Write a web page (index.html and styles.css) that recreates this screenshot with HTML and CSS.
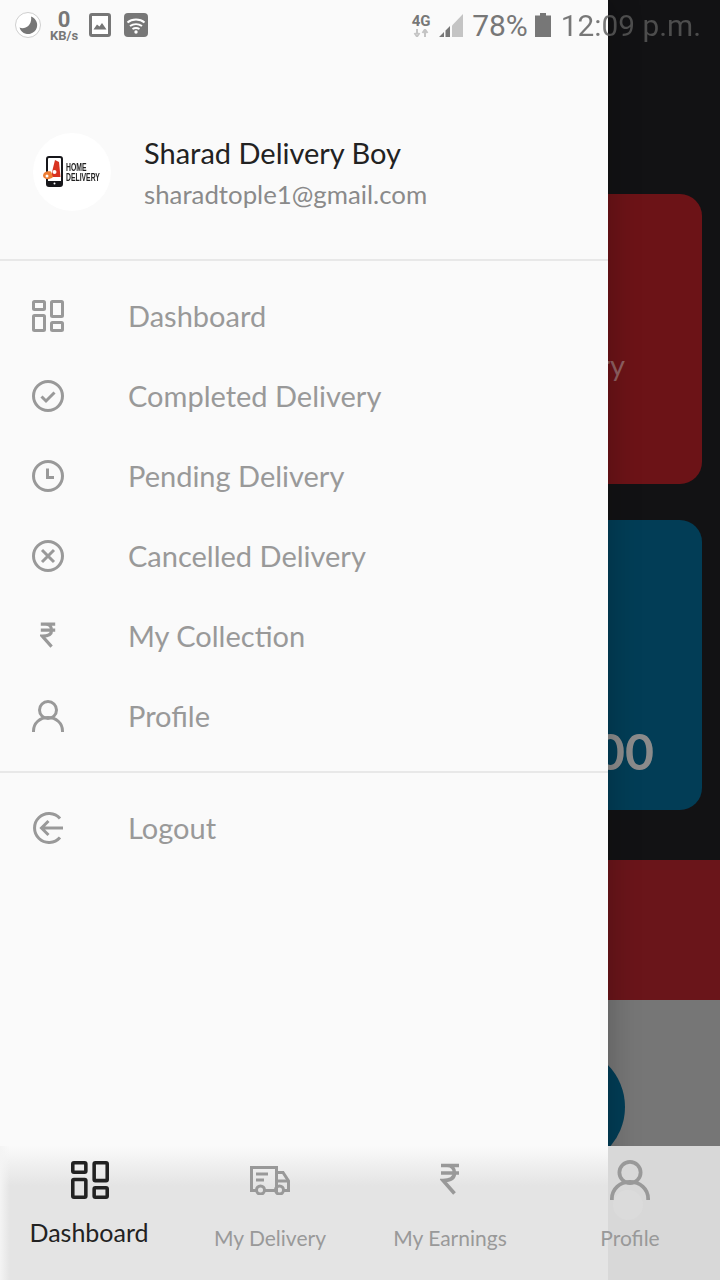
FILE: index.html
```html
<!DOCTYPE html>
<html lang="en">
<head>
  <meta charset="UTF-8">
  <meta name="viewport" content="width=device-width, initial-scale=1.0">
  <title>Home Delivery</title>
  <link rel="stylesheet" href="styles.css">
</head>
<body>

<svg class="defs" width="0" height="0">
  <symbol id="i-grid" viewBox="0 0 32 32">
    <rect x="1.500" y="1.500" width="11" height="8" rx="1"/>
    <rect x="1.500" y="15.500" width="11" height="15" rx="1"/>
    <rect x="19.500" y="1.500" width="11" height="15" rx="1"/>
    <rect x="19.500" y="22.500" width="11" height="8" rx="1"/>
  </symbol>
  <symbol id="i-rupee" viewBox="0 0 20 32">
    <path d="M1 2.500H19M1 10H19M1 2.500H7C12 2.500 14.500 6 14.500 10C14.500 14.500 11 17.500 3 17.500L14.500 30.500"/>
  </symbol>
  <symbol id="i-person" viewBox="0 0 32 32">
    <circle cx="16" cy="10" r="8.500"/>
    <path d="M1.500 32V31C1.500 23 8 17.500 16 17.500S30.500 23 30.500 31V32"/>
  </symbol>
  <symbol id="i-truck" viewBox="0 0 40 30">
    <path d="M6.500 25.500H1.500V2.500H26.500V25.500H14M26.500 7.500H33L38.500 16V25.500H33.500M26.500 25.500H25"/>
    <path d="M26.500 16H38M6 9H18M6 15H14"/>
    <circle cx="10.500" cy="25" r="4"/>
    <circle cx="29.500" cy="25" r="4"/>
  </symbol>
</svg>

<div class="screen">

  <div class="dashboard">
    <div class="card card-red"><span class="card-label">Delivery</span></div>
    <div class="card card-blue"><span class="card-value">00</span></div>
    <div class="band"></div>
    <div class="grey-area"><div class="round-btn"></div></div>
  </div>

  <aside class="drawer">
    <div class="user">
      <div class="avatar">
        <svg class="logo-phone" viewBox="0 0 22 32">
          <rect x="5" y="1" width="15" height="29" rx="2" fill="#fff" stroke="#17171b" stroke-width="2"/>
          <rect x="5" y="25" width="15" height="5" fill="#17171b"/>
          <path d="M13 4L17 6L18.500 21H9L11 12Z" fill="#d8321f"/>
          <path d="M1 20C1 16 5 14.500 9 15.500L11 21C8 24 2 24 1 20Z" fill="#ee7d33"/>
          <circle cx="5" cy="20" r="1.500" fill="#fff"/>
          <circle cx="12.500" cy="16" r="2" fill="#fff"/>
          <circle cx="12.500" cy="27.500" r="1" fill="#fff"/>
        </svg>
        <div class="logo-text">HOME<br>DELIVERY</div>
      </div>
      <div class="user-info">
        <div class="user-name">Sharad Delivery Boy</div>
        <div class="user-mail">sharadtople1@gmail.com</div>
      </div>
    </div>

    <ul class="menu">
      <li class="menu-item">
        <svg class="menu-icon"><use href="#i-grid"/></svg>
        Dashboard
      </li>
      <li class="menu-item">
        <svg class="menu-icon" viewBox="0 0 32 32"><circle cx="16" cy="16" r="14.500"/><path d="M9.500 16.500L14 21L22.500 12.500"/></svg>
        Completed Delivery
      </li>
      <li class="menu-item">
        <svg class="menu-icon" viewBox="0 0 32 32"><circle cx="16" cy="16" r="14.500"/><path d="M15.500 8.500V17.500H22"/></svg>
        Pending Delivery
      </li>
      <li class="menu-item">
        <svg class="menu-icon" viewBox="0 0 32 32"><circle cx="16" cy="16" r="14.500"/><path d="M10 10L22 22M22 10L10 22"/></svg>
        Cancelled Delivery
      </li>
      <li class="menu-item">
        <span class="menu-slot"><svg class="rupee-small"><use href="#i-rupee"/></svg></span>
        My Collection
      </li>
      <li class="menu-item">
        <svg class="menu-icon"><use href="#i-person"/></svg>
        Profile
      </li>
    </ul>

    <ul class="menu menu-last">
      <li class="menu-item">
        <svg class="menu-icon" viewBox="0 0 32 32"><path d="M28 6.500A14.500 14.500 0 1 0 28 25.500"/><path d="M31 16H10M16.500 9L9.500 16L16.500 23"/></svg>
        Logout
      </li>
    </ul>
  </aside>

  <div class="status-bar">
    <div class="status-left">
      <svg class="st-moon" viewBox="0 0 26 26"><circle cx="13" cy="13" r="12.500" fill="#fff" stroke="#cfcfcf"/><path d="M16 4.500A9 9 0 1 1 4.500 15.500C10 18 17.500 13 16 4.500Z" fill="#777"/></svg>
      <div class="st-speed"><b>0</b><span>KB/s</span></div>
      <svg class="st-image" viewBox="0 0 22 24"><rect x="1.500" y="1.500" width="19" height="21" rx="1.500" fill="#fff" stroke="#777" stroke-width="3"/><path d="M4.500 16.500L8 11.500L10.500 13.500L13 10L17.500 16.500Z" fill="#777"/></svg>
      <svg class="st-wifi" viewBox="0 0 24 24"><rect width="24" height="24" rx="4" fill="#777"/><path d="M3.500 9.500C8 5.500 16 5.500 20.500 9.500M6 13C9.500 10.500 14.500 10.500 18 13M8.500 16C10.500 14.800 13.500 14.800 15.500 16" fill="none" stroke="#fff" stroke-width="2"/><circle cx="12" cy="19" r="1.700" fill="#fff"/></svg>
    </div>
    <div class="status-right">
      <div class="st-net"><b>4G</b><svg viewBox="0 0 18 8" width="18" height="8"><path d="M5 0V5M2.500 4L5 7.500L7.500 4M13 8V3M10.500 4L13 .5L15.500 4" fill="none" stroke="#c4c4c4" stroke-width="2"/></svg></div>
      <svg class="st-signal" viewBox="0 0 24 24"><path d="M13 12.500L24 1V24H13Z" fill="#c4c4c4"/><path d="M0 24L5 19V24ZM6.500 17.500L11 13V24H6.500Z" fill="#777"/></svg>
      <span class="st-percent">78%</span>
      <svg class="st-battery" viewBox="0 0 16 24"><path d="M5 0H11V2.500H16V24H0V2.500H5Z" fill="#777"/></svg>
      <span class="st-time">12:09 p.m.</span>
    </div>
  </div>

  <nav class="bottom-nav">
    <div class="nav-item active">
      <svg class="nav-grid"><use href="#i-grid"/></svg>
      <span class="nav-label">Dashboard</span>
    </div>
    <div class="nav-item">
      <svg class="nav-truck"><use href="#i-truck"/></svg>
      <span class="nav-label">My Delivery</span>
    </div>
    <div class="nav-item">
      <svg class="nav-rupee"><use href="#i-rupee"/></svg>
      <span class="nav-label">My Earnings</span>
    </div>
    <div class="nav-item">
      <span class="nav-ghost"></span>
      <svg class="nav-person"><use href="#i-person"/></svg>
      <span class="nav-label">Profile</span>
    </div>
  </nav>

</div>

</body>
</html>
```

FILE: styles.css
```css
* {
  box-sizing: border-box;
}

body {
  margin: 0;
  font-family: Lato, "Noto Sans", sans-serif;
}

.defs {
  position: absolute;
}

.screen {
  position: relative;
  width: 720px;
  height: 1280px;
  overflow: hidden;
  display: flex;
  flex-direction: column;
  background: #121214;
}

/* page behind the open drawer */
.dashboard {
  flex: none;
  height: 1146px;
  padding-top: 194px;
  display: flex;
  flex-direction: column;
  overflow: hidden;
}

.card {
  flex: none;
  height: 290px;
  margin: 0 18px 36px 18px;
  border-radius: 22px;
  display: flex;
  justify-content: flex-end;
}

.card-red {
  background: #6c1317;
  align-items: center;
}

.card-blue {
  background: #023d56;
  margin-bottom: 50px;
  align-items: flex-end;
}

.card-label {
  margin-top: 50px;
  padding-right: 77px;
  font-size: 29px;
  color: #8f6062;
}

.card-value {
  padding: 0 48px 34px 0;
  font-size: 50px;
  font-weight: bold;
  line-height: 1;
  color: #8b8b8b;
}

.band {
  flex: none;
  height: 140px;
  background: #6a151a;
}

.grey-area {
  flex: 1;
  padding: 47px 0 0 505px;
  background: #767676;
}

.round-btn {
  width: 120px;
  height: 120px;
  border-radius: 50%;
  background: #023d56;
}

/* drawer */
.drawer {
  position: absolute;
  top: 0;
  left: 0;
  width: 608px;
  height: 1280px;
  background: #fafafa;
  box-shadow: 0 0 30px rgba(0, 0, 0, 0.25);
}

.user {
  height: 261px;
  padding: 133px 0 0 33px;
  display: flex;
  border-bottom: 2px solid #e8e8e8;
}

.avatar {
  width: 78px;
  height: 78px;
  border-radius: 50%;
  background: #fff;
  display: flex;
  align-items: center;
  padding-left: 9px;
}

.logo-phone {
  flex: none;
  width: 22px;
  height: 32px;
}

.logo-text {
  margin-left: 2px;
  font-family: "Liberation Sans", sans-serif;
  font-size: 11px;
  font-weight: bold;
  line-height: 10px;
  color: #222;
  transform: scaleX(0.62);
  transform-origin: left center;
}

.user-info {
  margin-left: 33px;
}

.user-name {
  font-size: 29px;
  line-height: 39px;
  color: #222;
}

.user-mail {
  font-size: 25.8px;
  line-height: 44px;
  color: #8a8a8a;
}

.menu {
  list-style: none;
  margin: 0;
  padding: 16px 0 14px;
  border-bottom: 2px solid #e8e8e8;
}

.menu-last {
  border-bottom: 0;
}

.menu-item {
  height: 80px;
  padding: 0 0 4px 32px;
  display: flex;
  align-items: center;
  font-size: 29px;
  color: #999;
}

.menu-icon,
.rupee-small,
.nav-item svg {
  fill: none;
  stroke: currentColor;
}

.menu-icon {
  width: 32px;
  height: 32px;
  margin: 1px 64px 0 0;
  stroke-width: 3;
}

.menu-slot {
  width: 32px;
  margin-right: 64px;
  display: flex;
  justify-content: center;
}

.rupee-small {
  width: 16px;
  height: 26px;
  stroke-width: 4;
}

/* status bar */
.status-bar {
  position: absolute;
  top: 0;
  left: 0;
  width: 720px;
  height: 50px;
  padding: 0 19px 0 15px;
  display: flex;
  justify-content: space-between;
  align-items: center;
  font-family: Roboto, sans-serif;
  color: #777;
}

.status-left,
.status-right {
  display: flex;
  align-items: center;
}

.st-moon {
  width: 26px;
  height: 26px;
}

.st-speed {
  margin-left: 9px;
  display: flex;
  flex-direction: column;
  align-items: center;
  line-height: 1;
}

.st-speed b {
  font-size: 22px;
  line-height: 20px;
}

.st-speed span {
  font-size: 13px;
  font-weight: bold;
  line-height: 11px;
}

.st-image {
  width: 22px;
  height: 24px;
  margin-left: 11px;
}

.st-wifi {
  width: 24px;
  height: 24px;
  margin-left: 13px;
}

.st-net {
  width: 20px;
  display: flex;
  flex-direction: column;
  align-items: center;
  font-size: 15px;
  line-height: 15px;
}

.st-signal {
  width: 24px;
  height: 24px;
  margin-left: 8px;
}

.st-percent {
  margin-left: 9px;
  font-size: 30px;
}

.st-battery {
  width: 16px;
  height: 24px;
  margin-left: 7px;
}

.st-time {
  margin-left: 10px;
  font-size: 29.8px;
  color: transparent;
  background: linear-gradient(to right, #777 47px, #4d4d4d 47px);
  -webkit-background-clip: text;
  background-clip: text;
}

/* bottom navigation */
.bottom-nav {
  position: relative;
  height: 134px;
  display: flex;
  background: linear-gradient(to right, #e4e4e4 608px, #d8d8d8 608px);
}

.bottom-nav::before {
  content: "";
  position: absolute;
  top: 0;
  left: 0;
  width: 608px;
  height: 40px;
  background: linear-gradient(to bottom, #fafafa, #e4e4e4);
}

.bottom-nav::after {
  content: "";
  position: absolute;
  top: 0;
  left: 0;
  width: 10px;
  height: 134px;
  background: linear-gradient(to right, #f4f4f4, rgba(244, 244, 244, 0));
}

.nav-item {
  position: relative;
  flex: 1;
  height: 134px;
  display: flex;
  flex-direction: column;
  align-items: center;
  color: #999;
}

.nav-item svg {
  stroke-width: 3;
}

.nav-grid {
  width: 38px;
  height: 38px;
  margin-top: 15px;
}

.nav-truck {
  width: 40px;
  height: 30px;
  margin-top: 19px;
}

.nav-item .nav-rupee {
  width: 20px;
  height: 32px;
  margin-top: 17px;
  stroke-width: 3.6;
}

.nav-person {
  position: relative;
  width: 40px;
  height: 40px;
  margin-top: 14px;
}

.nav-ghost {
  position: absolute;
  top: 44px;
  left: 73px;
  width: 30px;
  height: 30px;
  border-radius: 50%;
  background: #dbdbdb;
}

.nav-label {
  position: absolute;
  top: 76px;
  font-size: 21px;
  line-height: 32px;
}

.active {
  color: #222;
}

.active .nav-label {
  top: 70px;
  margin-right: 2px;
  font-size: 25px;
}
```
